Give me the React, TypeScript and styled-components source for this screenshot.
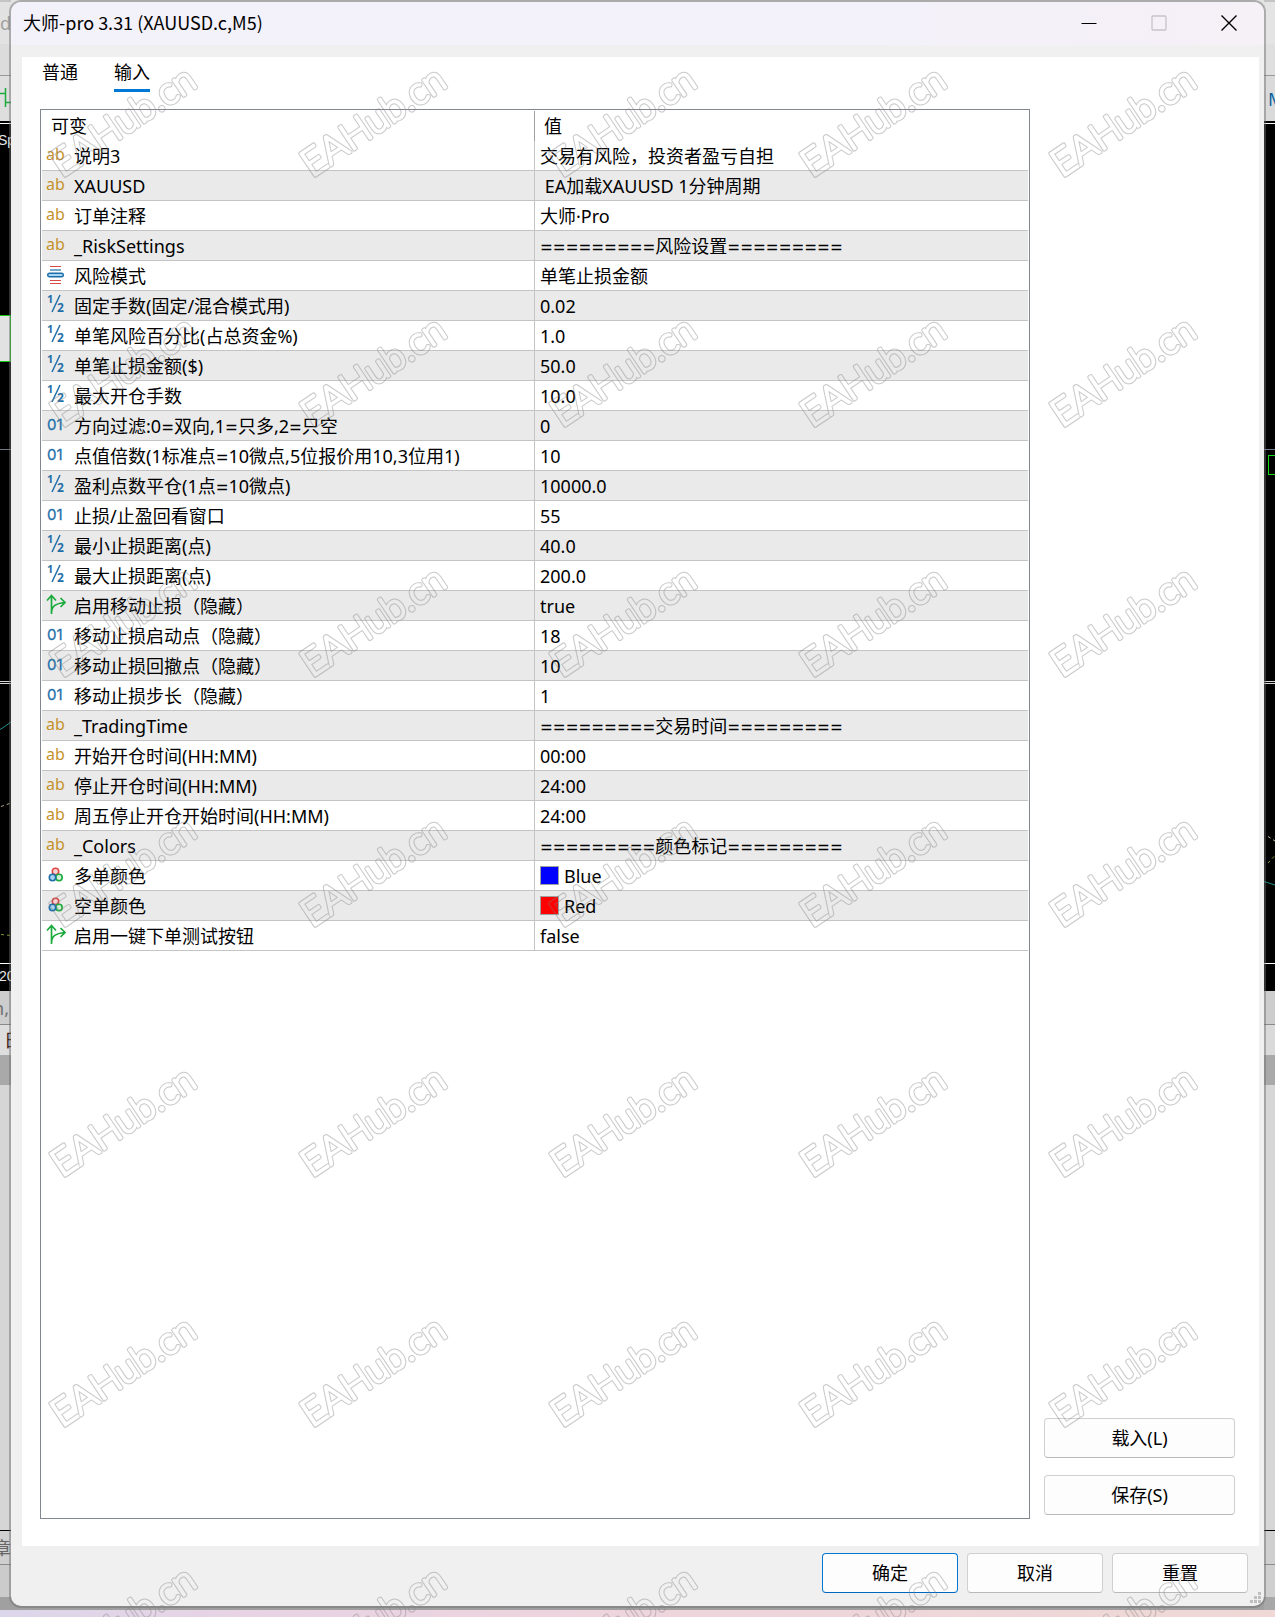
import React, { useState } from "react";
import styled, { createGlobalStyle } from "styled-components";

const GlobalStyle = createGlobalStyle`
  * { box-sizing: border-box; }
  body {
    margin: 0;
    background: #d6d6d6;
    color: #000;
    font-family: "Noto Sans", "Noto Sans CJK SC", sans-serif;
    font-size: 18px;
    line-height: 24px;
  }
  button { font: inherit; color: inherit; }
`;

const Desktop = styled.div`
  position: relative;
  display: grid;
  grid-template-columns: 11px minmax(0, 1fr) 11px;
  height: 100vh;
  min-height: 1240px;
  overflow: hidden;
  background: linear-gradient(#e3e3e3 0 50%, #a0a0a0 50%);
`;

/* ---- application behind the dialog ---- */

const Strip = styled.div`
  display: flex;
  flex-direction: column;
  overflow: hidden;
  white-space: nowrap;
`;

const Band = styled.div<{ $h?: number; $bg: string; $line?: string; $color?: string; $end?: boolean; $inset?: number }>`
  display: flex;
  align-items: center;
  justify-content: ${(p) => (p.$end ? "flex-end" : "flex-start")};
  flex: ${(p) => (p.$h ? `0 0 ${p.$h}px` : "1 1 0")};
  padding: 0 ${(p) => (p.$end ? p.$inset || 0 : 0)}px 0 ${(p) => (p.$end ? 0 : p.$inset || 0)}px;
  background: ${(p) => p.$bg};
  border-bottom: ${(p) => (p.$line ? `1px solid ${p.$line}` : "none")};
  color: ${(p) => p.$color || "#666"};
  overflow: hidden;
`;

const ChartSlice = styled.svg`
  display: block;
  flex: none;
  background: #000;
`;

/* ---- dialog ---- */

const Dialog = styled.section`
  display: flex;
  flex-direction: column;
  margin: 2px 0 11px;
  border-radius: 10px;
  background: #f0f0f0;
  box-shadow: 0 0 0 2px rgba(108, 108, 108, 0.47);
  z-index: 1;
`;

const TitleBar = styled.header`
  display: flex;
  align-items: stretch;
  height: 43px;
  padding-left: 12px;
  border-radius: 10px 10px 0 0;
  background: linear-gradient(90deg, #f3f1f9 0 70%, #f6f0f7);
`;

const Title = styled.h1`
  flex: 1;
  margin: 0;
  font-family: "Noto Sans CJK SC", sans-serif;
  font-size: 18px;
  font-weight: 400;
  line-height: 40px;
`;

const WindowButton = styled.button`
  display: flex;
  align-items: center;
  justify-content: center;
  width: 70px;
  padding: 0 0 2px;
  border: 0;
  background: none;
`;

const Panel = styled.div`
  flex: 1;
  min-height: 0;
  display: flex;
  flex-direction: column;
  margin: 12px 5px 0 11px;
  padding: 0 24px 27px 18px;
  background: #fff;
`;

const Tabs = styled.div`
  display: flex;
  gap: 36px;
  padding-left: 2px;
  margin-bottom: 17px;
`;

const Tab = styled.button<{ $active: boolean }>`
  height: 35px;
  padding: 0 0 2px;
  border: 0;
  border-bottom: 3px solid ${(p) => (p.$active ? "#0078d7" : "transparent")};
  background: none;
  line-height: 30px;
`;

const Content = styled.div`
  flex: 1;
  min-height: 0;
  display: flex;
  gap: 14px;
`;

const TableFrame = styled.div`
  flex: 1;
  padding: 1px;
  border: 1px solid #828790;
`;

const InputsTable = styled.table`
  width: 100%;
  table-layout: fixed;
  border-spacing: 0;
`;

const HeadCell = styled.th`
  height: 30px;
  padding: 0 9px;
  text-align: left;
  font-weight: 400;
  &:first-child { border-right: 1px solid #a0a0a0; }
`;

const Row = styled.tr`
  &:nth-child(even) { background: #eaeaea; }
`;

const Cell = styled.td`
  height: 30px;
  padding: 0 5px;
  border-bottom: 1px solid #c4c4c4;
  &:first-child {
    padding: 0 4px;
    border-right: 1px solid #c4c4c4;
  }
`;

const CellLine = styled.div<{ $gap: number }>`
  display: flex;
  align-items: center;
  gap: ${(p) => p.$gap}px;
  height: 29px;
  white-space: pre;
`;

const CellText = styled.span``;

const Equals = styled.span`
  font-family: "DejaVu Sans Condensed", "DejaVu Sans", sans-serif;
  font-size: 17px;
  line-height: 20px;
`;

const Swatch = styled.span<{ $color: string }>`
  width: 19px;
  height: 19px;
  border: 1px solid #a0a0a0;
  background: ${(p) => p.$color};
`;

const SideActions = styled.div`
  display: flex;
  flex-direction: column;
  justify-content: flex-end;
  gap: 17px;
  width: 191px;
  padding-bottom: 4px;
`;

const PushButton = styled.button<{ $primary?: boolean }>`
  height: 40px;
  min-width: 136px;
  padding: 0 8px;
  border: 1px solid ${(p) => (p.$primary ? "#0078d4" : "#d0d0d0")};
  border-bottom-color: ${(p) => (p.$primary ? "#0067c0" : "#b9b9b9")};
  border-radius: 4px;
  background: #fdfdfd;
`;

const Footer = styled.footer`
  position: relative;
  display: flex;
  justify-content: flex-end;
  gap: 9px;
  padding: 7px 16px 13px;
`;

const Grip = styled.svg`
  position: absolute;
  right: 2px;
  bottom: 2px;
`;

const Watermark = styled.svg`
  position: absolute;
  inset: 0;
  width: 100%;
  height: 100%;
  pointer-events: none;
  z-index: 2;
`;

/* ---- icons ---- */

type Kind = "string" | "enum" | "double" | "int" | "bool" | "color";

const BLUE = "#1f6fa8";

function KindIcon({ kind }: { kind: Kind }) {
  return (
    <svg width="20" height="23" viewBox="0 0 20 23" aria-hidden="true">
      {kind === "string" && (
        <text x="0" y="16" fontSize="16" fill="#c4922c" fontFamily="Noto Sans">ab</text>
      )}
      {kind === "int" && (
        <text x="1" y="16" fontSize="15" fill={BLUE} stroke={BLUE} strokeWidth="0.3" fontFamily="Inter">01</text>
      )}
      {kind === "double" && (
        <>
          <text x="1" y="9" fontSize="11" fontWeight="700" fill={BLUE} fontFamily="Noto Sans">1</text>
          <path d="M14 1L6 18" stroke={BLUE} strokeWidth="1.500" />
          <text x="11" y="18" fontSize="12" fontWeight="700" fill={BLUE} fontFamily="Noto Sans">2</text>
        </>
      )}
      {kind === "enum" && (
        <>
          <path d="M4 2.500H15M4 16.500H15M4 19.500H15" stroke="#dc4a48" strokeWidth="1.200" />
          <path d="M4 6H15" stroke={BLUE} strokeWidth="1.200" />
          <rect x="1.700" y="9.200" width="15.600" height="3.600" rx="1.800" fill="#a9d6f4" stroke={BLUE} strokeWidth="1.400" />
        </>
      )}
      {kind === "bool" && (
        <path
          d="M5.500 20V2M1 6.500L5.500 1.500L10 6.500M5.500 19C5.500 12.500 9 9.500 19 8.500M14.500 4L19 8.500L14.500 13"
          fill="none"
          stroke="#1cab3c"
          strokeWidth="1.700"
        />
      )}
      {kind === "color" && (
        <>
          <circle cx="9.500" cy="7.500" r="3.200" fill="#fbd5d5" stroke="#dc4a48" strokeWidth="1.600" />
          <circle cx="13" cy="13.500" r="3.200" fill="#d2f2d8" stroke="#1cab3c" strokeWidth="1.600" />
          <circle cx="6.500" cy="13.500" r="3.200" fill="#a9d3f0" stroke={BLUE} strokeWidth="1.600" />
        </>
      )}
    </svg>
  );
}

/* ---- data ---- */

type Input = { kind: Kind; name: string; value: string; swatch?: string };

const BAR = "=========";

const inputs: Input[] = [
  { kind: "string", name: "说明3", value: "交易有风险，投资者盈亏自担" },
  { kind: "string", name: "XAUUSD", value: " EA加载XAUUSD 1分钟周期" },
  { kind: "string", name: "订单注释", value: "大师·Pro" },
  { kind: "string", name: "_RiskSettings", value: `${BAR}风险设置${BAR}` },
  { kind: "enum", name: "风险模式", value: "单笔止损金额" },
  { kind: "double", name: "固定手数(固定/混合模式用)", value: "0.02" },
  { kind: "double", name: "单笔风险百分比(占总资金%)", value: "1.0" },
  { kind: "double", name: "单笔止损金额($)", value: "50.0" },
  { kind: "double", name: "最大开仓手数", value: "10.0" },
  { kind: "int", name: "方向过滤:0=双向,1=只多,2=只空", value: "0" },
  { kind: "int", name: "点值倍数(1标准点=10微点,5位报价用10,3位用1)", value: "10" },
  { kind: "double", name: "盈利点数平仓(1点=10微点)", value: "10000.0" },
  { kind: "int", name: "止损/止盈回看窗口", value: "55" },
  { kind: "double", name: "最小止损距离(点)", value: "40.0" },
  { kind: "double", name: "最大止损距离(点)", value: "200.0" },
  { kind: "bool", name: "启用移动止损（隐藏）", value: "true" },
  { kind: "int", name: "移动止损启动点（隐藏）", value: "18" },
  { kind: "int", name: "移动止损回撤点（隐藏）", value: "10" },
  { kind: "int", name: "移动止损步长（隐藏）", value: "1" },
  { kind: "string", name: "_TradingTime", value: `${BAR}交易时间${BAR}` },
  { kind: "string", name: "开始开仓时间(HH:MM)", value: "00:00" },
  { kind: "string", name: "停止开仓时间(HH:MM)", value: "24:00" },
  { kind: "string", name: "周五停止开仓开始时间(HH:MM)", value: "24:00" },
  { kind: "string", name: "_Colors", value: `${BAR}颜色标记${BAR}` },
  { kind: "color", name: "多单颜色", value: "Blue", swatch: "#0000ff" },
  { kind: "color", name: "空单颜色", value: "Red", swatch: "#ff0000" },
  { kind: "bool", name: "启用一键下单测试按钮", value: "false" },
];

/* The equals sign is set in a wider face than the rest of the text. */
function RichText({ text }: { text: string }) {
  return (
    <CellText>
      {text.split(/(=+)/).map((part, i) =>
        part.startsWith("=") ? <Equals key={i}>{part}</Equals> : part
      )}
    </CellText>
  );
}

function LeftStrip() {
  return (
    <Strip aria-hidden="true">
      <Band $h={2} $bg="#c4c4c4" />
      <Band $h={42} $bg="#e2e2e2" $color="#a0a0a0">d</Band>
      <Band $h={32} $bg="#dcdcdc" $line="#999" />
      <Band $h={45} $bg="#dedede">
        <svg width="11" height="24" viewBox="0 0 11 24">
          <path d="M0 6.500H5M5.500 1V20M5 15.500H11" fill="none" stroke="#1cab3c" strokeWidth="1.500" />
        </svg>
      </Band>
      <ChartSlice width="11" height="870" viewBox="0 0 11 870">
        <path d="M0 2.500H11M0 842.500H11" stroke="#fff" />
        <text x="-2" y="24" fontSize="14" fill="#e6e6e6" fontFamily="Liberation Sans">Sp</text>
        <rect x="-2" y="194.500" width="12.500" height="46" fill="#e2e2e2" stroke="#14c814" />
        <path d="M0 328.500H11" stroke="#6e7884" />
        <path d="M0 560.500H11M0 562.500H11" stroke="#d8d8d8" />
        <path d="M0 608.500L4 606L11 601" fill="none" stroke="#1f8f88" />
        <path d="M1 685.500L11 682" stroke="#b8a888" strokeDasharray="3 3" />
        <path d="M1 813.500L11 814.500" stroke="#7d9a2c" strokeDasharray="3 3" />
        <text x="-1" y="860" fontSize="14" fill="#e6e6e6" fontFamily="Liberation Sans">20</text>
      </ChartSlice>
      <Band $h={34} $bg="#cdcdcd" $line="#8a8a8a" $color="#707070" $end $inset={2}>n,</Band>
      <Band $h={30} $bg="#dedede" $color="#3a1a14" $inset={4}>日</Band>
      <Band $h={30} $bg="#a9a9a9" />
      <Band $bg="#d6d6d6" $line="#000" />
      <Band $h={34} $bg="#cfcfcf" $line="#8c8c8c" $end>章</Band>
      <Band $h={32} $bg="#cbcbcb" />
      <Band $h={13} $bg="#a0a0a0" />
      <Band $h={7} $bg="#ddd6ea" />
    </Strip>
  );
}

function RightStrip() {
  return (
    <Strip aria-hidden="true">
      <Band $h={2} $bg="#c4c4c4" />
      <Band $h={42} $bg="#e4e4e4" />
      <Band $h={32} $bg="#dfdfdf" $line="#999" />
      <Band $h={45} $bg="#dadada">
        <svg width="11" height="24" viewBox="0 0 11 24">
          <text x="4" y="19" fontSize="18" fill="#0a62a0" fontFamily="Noto Sans">M</text>
        </svg>
      </Band>
      <ChartSlice width="11" height="870" viewBox="0 0 11 870">
        <path d="M0 2.500H11M0 842.500H11" stroke="#fff" />
        <path d="M0 328.500H11" stroke="#6e7884" />
        <rect x="4.500" y="334.500" width="12" height="19" fill="none" stroke="#14dc14" />
        <path d="M0 560.500H11M0 562.500H11" stroke="#d8d8d8" />
        <path d="M4 715.500L11 720" stroke="#c8b898" strokeDasharray="3 3" />
        <path d="M4 742L11 734.500" stroke="#86a42c" strokeDasharray="3 3" />
        <path d="M0 760.500L11 764" stroke="#1f8f88" />
      </ChartSlice>
      <Band $h={34} $bg="#cdcdcd" $line="#8a8a8a" />
      <Band $h={30} $bg="#dadada" />
      <Band $h={30} $bg="#a9a9a9" />
      <Band $bg="#d6d6d6" $line="#000" />
      <Band $h={34} $bg="#cfcfcf" $line="#8c8c8c" />
      <Band $h={32} $bg="#cfcfcf" />
      <Band $h={13} $bg="#a8a8a8" />
      <Band $h={7} $bg="#efd9d8" />
    </Strip>
  );
}

const Taskbar = styled.div`
  position: absolute;
  left: 0;
  right: 0;
  bottom: 0;
  height: 7px;
  background: linear-gradient(90deg, #dcd6ea, #e8d3e4 20%, #eed4dc 50%, #efd8d6);
`;

export default function App() {
  const [tab, setTab] = useState("输入");

  return (
    <>
      <GlobalStyle />
      <Desktop>
        <LeftStrip />
        <Dialog role="dialog" aria-labelledby="dialog-title">
          <TitleBar>
            <Title id="dialog-title">大师-pro 3.31 (XAUUSD.c,M5)</Title>
            <WindowButton aria-label="最小化">
              <svg width="16" height="16" viewBox="0 0 16 16">
                <path d="M0.500 8.500H15.500" stroke="#000" />
              </svg>
            </WindowButton>
            <WindowButton aria-label="最大化" disabled>
              <svg width="16" height="16" viewBox="0 0 16 16">
                <rect x="1" y="1" width="14" height="14" rx="1" fill="none" stroke="#c5c2ca" strokeWidth="1.300" />
              </svg>
            </WindowButton>
            <WindowButton aria-label="关闭">
              <svg width="16" height="16" viewBox="0 0 16 16">
                <path d="M0.500 0.500L15.500 15.500M15.500 0.500L0.500 15.500" stroke="#000" strokeWidth="1.400" />
              </svg>
            </WindowButton>
          </TitleBar>

          <Panel>
            <Tabs role="tablist">
              {["普通", "输入"].map((name) => (
                <Tab
                  key={name}
                  role="tab"
                  aria-selected={tab === name}
                  $active={tab === name}
                  onClick={() => setTab(name)}
                >
                  {name}
                </Tab>
              ))}
            </Tabs>
            <Content>
              <TableFrame>
                <InputsTable>
                  <thead>
                    <tr>
                      <HeadCell scope="col">可变</HeadCell>
                      <HeadCell scope="col">值</HeadCell>
                    </tr>
                  </thead>
                  <tbody>
                    {inputs.map((input) => (
                      <Row key={input.name}>
                        <Cell>
                          <CellLine $gap={8}>
                            <KindIcon kind={input.kind} />
                            <RichText text={input.name} />
                          </CellLine>
                        </Cell>
                        <Cell>
                          <CellLine $gap={5}>
                            {input.swatch && <Swatch $color={input.swatch} />}
                            <RichText text={input.value} />
                          </CellLine>
                        </Cell>
                      </Row>
                    ))}
                  </tbody>
                </InputsTable>
              </TableFrame>
              <SideActions>
                <PushButton>载入(L)</PushButton>
                <PushButton>保存(S)</PushButton>
              </SideActions>
            </Content>
          </Panel>

          <Footer>
            <PushButton $primary>确定</PushButton>
            <PushButton>取消</PushButton>
            <PushButton>重置</PushButton>
            <Grip width="12" height="12" viewBox="0 0 12 12" aria-hidden="true">
              <path
                d="M8 0h3v3h-3zM4 4h3v3h-3zM8 4h3v3h-3zM0 8h3v3h-3zM4 8h3v3h-3zM8 8h3v3h-3z"
                fill="#bfbfbf"
              />
            </Grip>
          </Footer>
        </Dialog>
        <RightStrip />
        <Taskbar />
        <Watermark aria-hidden="true">
          <defs>
            <pattern id="mark" width="250" height="250" patternUnits="userSpaceOnUse">
              <g
                transform="translate(62 178) rotate(-34)"
                fontFamily="Lato"
                fontSize="38"
                fontWeight="300"
                strokeLinejoin="round"
              >
                <text fill="#fff" stroke="#fff" strokeWidth="4">EAHub.cn</text>
                <text fill="#000" stroke="#000" strokeWidth="2">EAHub.cn</text>
              </g>
            </pattern>
            <mask id="outline" maskUnits="userSpaceOnUse" x="0" y="0" width="100%" height="100%">
              <rect width="100%" height="100%" fill="url(#mark)" />
            </mask>
          </defs>
          <rect width="100%" height="100%" fill="#808080" fillOpacity="0.42" mask="url(#outline)" />
        </Watermark>
      </Desktop>
    </>
  );
}
